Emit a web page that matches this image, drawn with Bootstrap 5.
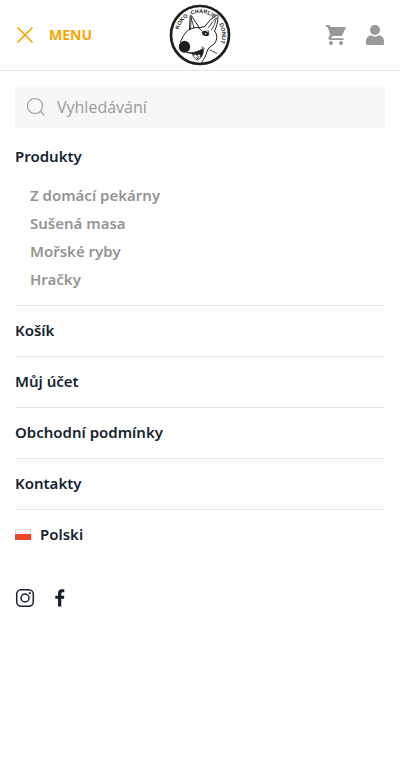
<!DOCTYPE html>
<html lang="cs">
<head>
<meta charset="utf-8">
<meta name="viewport" content="width=device-width, initial-scale=1">
<title>Koko Charlie Donut – Menu</title>
<link href="https://cdn.jsdelivr.net/npm/bootstrap@5.3.0/dist/css/bootstrap.min.css" rel="stylesheet">
<style>
  body { font-family: "Open Sans", "Noto Sans", sans-serif; color: #151f30; background: #fff; }
  a { color: inherit; text-decoration: none; }
  svg { display: block; }
  .site-header { height: 71px; padding: 0 15px; border-bottom: 1px solid #e5e5e5; }
  .header-side { flex: 1 1 0; }
  .menu-toggle { color: #faa500; gap: 14px; font: 700 14px/20px "Noto Sans", sans-serif; }
  .header-icons { gap: 20px; color: #999; }
  .menu-body { padding: 15px; }
  .search-box { height: 42px; background: #f7f7f7; color: #999; padding: 0 11px; gap: 11px; }
  .search-box input { font-size: 16px; color: #666; min-width: 0; }
  .search-box input::placeholder { color: #999; opacity: 1; }
  .main-menu { font: 600 15px/20px "Noto Sans", sans-serif; margin-top: 4px; }
  .main-menu > li { padding: 14px 0 16px; }
  .main-menu > li + li { border-top: 1px solid #e5e5e5; }
  .sub-menu { color: #949494; padding: 15px 0 0 15px; }
  .sub-menu li { padding: 4px 0; }
  .sub-menu li:last-child { padding-bottom: 0; }
  .lang-link { gap: 9px; }
  .social { gap: 15px; margin-top: 28px; }
</style>
<script src="https://cdn.jsdelivr.net/npm/bootstrap@5.3.0/dist/js/bootstrap.bundle.min.js"></script>
</head>
<body>
<header class="site-header d-flex align-items-center">
  <div class="header-side d-flex">
    <button type="button" class="menu-toggle btn p-0 border-0 d-flex align-items-center">
      <svg width="20" height="20" viewBox="0 0 20 20" fill="none" stroke="currentColor" stroke-width="1.700" aria-hidden="true"><path d="M2.500 2.500l15 15M17.500 2.500l-15 15"/></svg>
      <span>MENU</span>
    </button>
  </div>
  <a href="#" aria-label="Koko Charlie Donut">
    <svg width="62" height="62" viewBox="4 4 62 62" fill="none" stroke="#1d1d1b" stroke-linecap="round" stroke-linejoin="round">
      <defs><path id="ring" d="M35 57a22 22 0 1 1 .01 0"/></defs>
      <circle cx="35" cy="35" r="29" fill="#fff" stroke-width="2.700"/>
      <path stroke-width="1" d="M15.500 41.500C18 37 20 31.500 24.500 29.500L25.200 15.500Q25.700 14.500 26.300 15.500L34.300 27.700M24.500 29.500Q29 26.500 34.300 27.700L40 26.500Q44.500 19 51.500 15.200Q53 14.500 53 16.500C53 22 51.500 27 49.500 31C52 34 52.500 38 50.500 42C48.500 46 44 46 42.500 50C41.500 54 40 58 36.500 62.500"/>
      <path stroke-width=".8" d="M26 17.500L29 28M26.300 17L25.500 29M43.500 27.500Q46.500 23 50.500 18.500M46.500 30Q50 25 51.500 18M33.500 27.900L37 31M45 50L52 53.500M43 30.500L44 34.500"/>
      <path stroke-width="1.500" d="M37.500 32.500Q40 30 43 33.500M38 34.500L43 35"/>
      <path fill="#1d1d1b" stroke-width=".7" d="M38.500 31.500Q42.500 32 43 35.500Q40 37 38 33.500Z"/>
      <circle cx="40.700" cy="33.700" r=".7" fill="#fff" stroke="none"/>
      <ellipse cx="19.500" cy="46.700" rx="5.700" ry="6" fill="#1d1d1b" stroke="none"/>
      <path fill="#1d1d1b" stroke-width=".7" d="M22 52.500Q31 53.500 38 48.500Q39 52 37.500 54.500Q36.500 58 34.500 58.500L30 54.500Q26 53.500 22 52.500Z"/>
      <path fill="#fff" stroke-width=".7" d="M27.500 54L29 55.500L30.500 54L32 55.500L34 53.800L35.500 55.500Q35.500 59.500 32.500 60Q28.500 59 27.500 54Z"/>
      <path stroke-width=".8" d="M37 47Q39 47.500 39.500 49M31 57.500L33 59M33 56Q34 57.500 32.500 59"/>
      <g fill="#1d1d1b" stroke="none" font-family="Liberation Sans, sans-serif" font-weight="700" font-size="5.500">
        <text><textPath href="#ring" startOffset="40">KOKO</textPath></text>
        <text><textPath href="#ring" startOffset="60">CHARLIE</textPath></text>
        <text><textPath href="#ring" startOffset="92">DONUT</textPath></text>
      </g>
    </svg>
  </a>
  <nav class="header-side header-icons d-flex justify-content-end" aria-label="Účet a košík">
    <a href="#" aria-label="Košík"><svg width="20" height="20" viewBox="-1 0 20 20" overflow="visible" fill="currentColor"><path d="M0 0h3.400l1 2H20l-4 9H6.500l-1.700 2.200H17.500v1.800H4.500Q1.500 14.500 2.700 12L4 9.700 1.800 2H0z"/><circle cx="5" cy="18" r="2"/><circle cx="15" cy="18" r="2"/></svg></a>
    <a href="#" aria-label="Můj účet"><svg width="20" height="20" viewBox="0 0 20 20" fill="currentColor"><circle cx="10" cy="5" r="5"/><path d="M6 10.300Q10 13 14 10.300Q19 11.500 19 16v2.500Q19 20 17.500 20h-15Q1 20 1 18.500V16Q1 11.500 6 10.300z"/></svg></a>
  </nav>
</header>
<main class="menu-body">
  <form class="search-box d-flex align-items-center" role="search">
    <label for="search"><svg width="20" height="20" viewBox="0 0 20 20" fill="none" stroke="currentColor" stroke-width="1.100" role="img" aria-label="Hledat"><circle cx="9" cy="9" r="7.500"/><path d="M14.300 14.300l4.200 4.200"/></svg></label>
    <input id="search" type="search" class="border-0 bg-transparent p-0 flex-grow-1" placeholder="Vyhledávání">
  </form>
  <ul class="main-menu list-unstyled mb-0">
    <li><a href="#">Produkty</a>
      <ul class="sub-menu list-unstyled">
        <li><a href="#">Z domácí pekárny</a></li>
        <li><a href="#">Sušená masa</a></li>
        <li><a href="#">Mořské ryby</a></li>
        <li><a href="#">Hračky</a></li>
      </ul>
    </li>
    <li><a href="#">Košík</a></li>
    <li><a href="#">Můj účet</a></li>
    <li><a href="#">Obchodní podmínky</a></li>
    <li><a href="#">Kontakty</a></li>
    <li><a href="#" class="lang-link d-flex align-items-center">
      <svg width="16" height="11" viewBox="0 0 16 11" aria-hidden="true"><path fill="#f4f2f2" d="M0 0h16v6H0z"/><path fill="#ed4528" d="M0 5h16v6H0z"/><path fill="none" stroke="#cf4a35" stroke-opacity=".5" d="M.5 5v5.500h15V5"/><path fill="none" stroke="#ddd" d="M.5 5V.5h15V5"/></svg>
      <span>Polski</span></a></li>
  </ul>
  <nav class="social d-flex" aria-label="Sociální sítě">
    <a href="#" aria-label="Instagram"><svg width="20" height="20" viewBox="0 0 20 20" fill="none" stroke="currentColor" stroke-width="1.500"><rect x="1.700" y="1.700" width="16.600" height="16.600" rx="4.500"/><circle cx="10" cy="10" r="4"/><circle cx="14.800" cy="5.200" r="1.100" fill="currentColor" stroke="none"/></svg></a>
    <a href="#" aria-label="Facebook"><svg width="20" height="20" viewBox="0 0 20 20" fill="currentColor"><path d="M8 18.500V10.800H5.300V7.700H8V5.300Q8 1.200 12 1.200h2.300v3h-1.700Q11.300 4.200 11.300 5.500v2.200h3L14 10.800h-2.700v7.700z"/></svg></a>
  </nav>
</main>
</body>
</html>
